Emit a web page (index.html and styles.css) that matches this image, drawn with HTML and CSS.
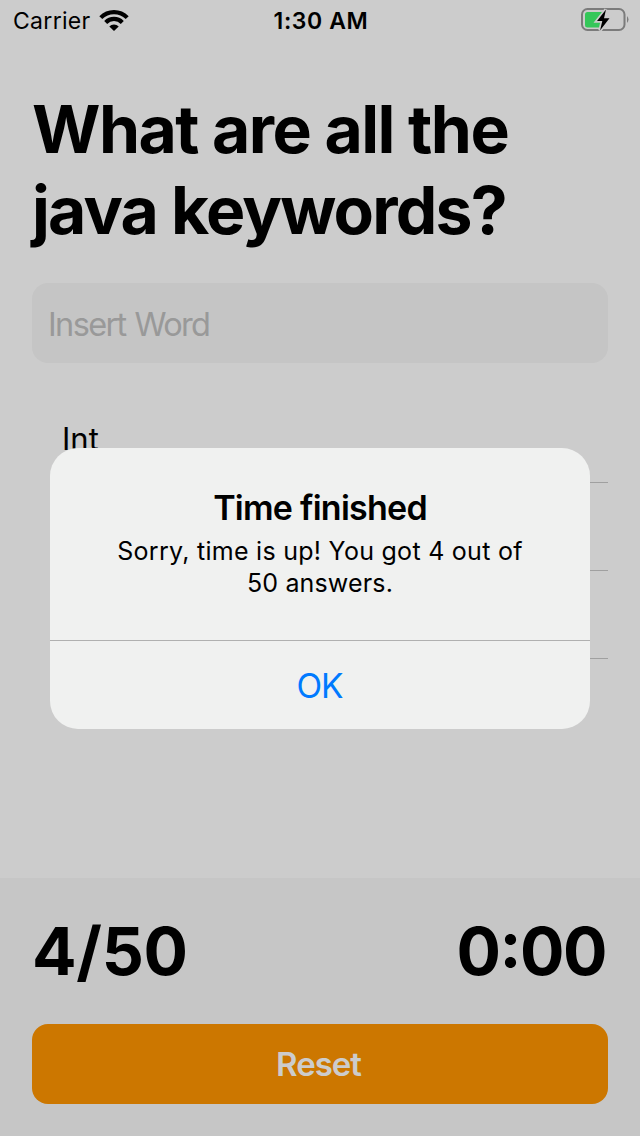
FILE: index.html
```html
<!DOCTYPE html>
<html lang="en">
<head>
<meta charset="utf-8">
<title>Java keywords</title>
<link rel="stylesheet" href="styles.css">
</head>
<body>
<div class="screen">
  <header class="status">
    <div class="carrier"><span class="carrier-name">Carrier</span>
      <svg class="wifi" width="30" height="22" viewBox="0 0 30 22"><g fill="none" stroke="#000" stroke-width="4.2"><path d="M1.800 8.600A18.500 18.500 0 0 1 28.200 8.600"/><path d="M6.700 13.400A11.700 11.700 0 0 1 23.300 13.400"/></g><path d="M15 22L10.300 17.400A6.700 6.700 0 0 1 19.700 17.400Z"/></svg>
    </div>
    <span class="clock">1:30 AM</span>
    <svg class="battery" width="48" height="24" viewBox="0 0 48 24"><rect x="1" y="1" width="42.500" height="21" rx="5.500" fill="none" stroke="#7b7b7b" stroke-width="2"/><rect x="4" y="4" width="20" height="15.500" rx="2.500" fill="#34c759"/><path d="M46 8Q49 11.500 46 15Z" fill="#7b7b7b"/><path class="bolt" d="M25 1.500L16 13H21.300L19 22.500L28.500 10.300H23Z"/></svg>
  </header>
  <main class="content">
    <h1 class="title"><span class="line title-one">What are all the</span><span class="line title-two">java keywords?</span></h1>
    <div class="field"><span class="placeholder">Insert Word</span></div>
    <ul class="words"><li class="word"><span class="word-text">Int</span></li><li class="word"></li><li class="word"></li></ul>
  </main>
  <footer class="footer">
    <div class="stats"><span class="score">4/50</span><span class="time">0:00</span></div>
    <button class="reset"><span class="reset-text">Reset</span></button>
  </footer>
  <section class="alert" role="alertdialog">
    <div class="alert-body"><h2 class="alert-title">Time finished</h2><p class="alert-message"><span class="line msg-one">Sorry, time is up! You got 4 out of</span><span class="line msg-two">50 answers.</span></p></div>
    <button class="ok">OK</button>
  </section>
</div>
</body>
</html>
```
FILE: styles.css
```css
* { box-sizing: border-box; }
body { margin: 0; font-family: Inter, sans-serif; color: #000; }
h1, h2, p, ul { margin: 0; padding: 0; }
.line { display: block; white-space: nowrap; }
.screen { position: relative; width: 640px; height: 1136px; background: #ccc; display: flex; flex-direction: column; overflow: hidden; }
.status { height: 40px; display: grid; grid-template-columns: 1fr auto 1fr; align-items: center; padding: 1px 11px 0 13px; font-size: 23px; }
.carrier { display: flex; align-items: center; gap: 8px; }
.carrier-name { letter-spacing: 0.3px; }
.wifi { margin-top: -2px; }
.clock { font-weight: 600; letter-spacing: 0.6px; }
.battery { justify-self: end; margin-top: -1px; }
.bolt { stroke: #ccc; stroke-width: 3.4px; paint-order: stroke; }
.content { flex: 1; padding: 49px 32px 0; }
.title { font-size: 66px; line-height: 81px; font-weight: 700; }
.title-one { letter-spacing: -1.53px; }
.title-two { letter-spacing: -1.8px; }
.field { height: 80px; margin-top: 32px; border-radius: 16px; background: #c5c5c5; padding: 2px 16px 0; display: flex; align-items: center; font-size: 32.5px; color: #999; }
.placeholder { letter-spacing: -1.65px; word-spacing: 1.5px; }
.words { list-style: none; padding: 32px 0 0 30px; }
.word { height: 88px; border-bottom: 1px solid #a0a0a0; display: flex; align-items: center; font-size: 31px; }
.footer { height: 258px; background: #c6c6c6; padding: 32px; }
.stats { height: 82px; display: flex; justify-content: space-between; line-height: 82px; font-size: 66px; font-weight: 700; }
.score { letter-spacing: -0.3px; }
.time { letter-spacing: -1.5px; margin-right: 2px; font-feature-settings: "case"; }
.reset { display: flex; align-items: center; justify-content: center; width: 100%; height: 80px; margin-top: 32px; border: 0; border-radius: 16px; background: #cc7700; color: #ccc; font: 600 33px Inter, sans-serif; }
.reset-text { letter-spacing: -1px; margin-right: 3px; }
.alert { position: absolute; left: 50px; top: 448px; width: 540px; height: 281px; border-radius: 28px; background: #f0f1f0; overflow: hidden; text-align: center; }
.alert-body { height: 193px; padding-top: 39px; border-bottom: 1px solid #b0b0b0; }
.alert-title { font-size: 34px; line-height: 41px; font-weight: 600; letter-spacing: -0.75px; }
.alert-message { font-size: 25px; line-height: 32px; margin-top: 7px; }
.msg-one { letter-spacing: 0.27px; }
.msg-two { letter-spacing: 0.15px; }
.ok { width: 100%; height: 88px; border: 0; padding: 1px 1px 0 0; background: transparent; color: #007aff; font: 400 33.5px Inter, sans-serif; letter-spacing: -1px; }
```
